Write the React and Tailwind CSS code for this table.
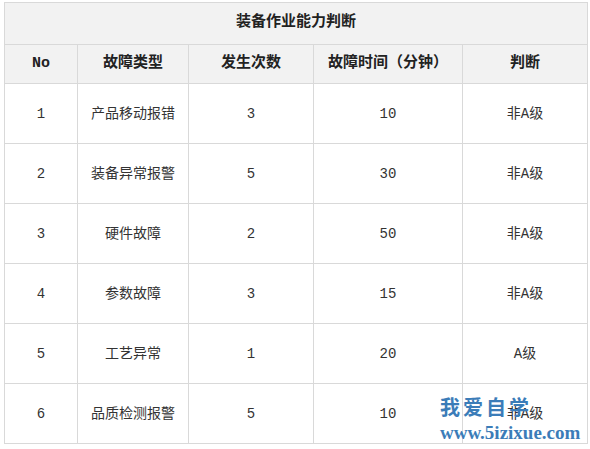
const rows = [
  ['1', '产品移动报错', '3', '10', '非A级'],
  ['2', '装备异常报警', '5', '30', '非A级'],
  ['3', '硬件故障', '2', '50', '非A级'],
  ['4', '参数故障', '3', '15', '非A级'],
  ['5', '工艺异常', '1', '20', 'A级'],
  ['6', '品质检测报警', '5', '10', '非A级'],
]

const headers = ['No', '故障类型', '发生次数', '故障时间（分钟）', '判断']

export default function App() {
  return (
    <div
      className="relative h-[449px] w-[590px] overflow-hidden bg-white pl-[4px] pt-[2px] text-[#333]"
      style={{ fontFamily: '"Liberation Mono", "Noto Sans CJK SC", monospace' }}
    >
      <table className="w-[583px] table-fixed border-collapse border border-[#d9d9d9] text-center">
        <colgroup>
          <col className="w-[73px]" />
          <col className="w-[111px]" />
          <col className="w-[125px]" />
          <col className="w-[149px]" />
          <col className="w-[125px]" />
        </colgroup>
        <thead>
          <tr className="h-[42px] bg-[#f2f2f2]">
            <th colSpan={5} className="border border-[#d9d9d9] text-[15px] font-bold text-[#222]">
              装备作业能力判断
            </th>
          </tr>
          <tr className="h-[39px] bg-[#f2f2f2]">
            {headers.map((h) => (
              <th key={h} className="border border-[#d9d9d9] text-[15px] font-bold text-[#222]">
                {h}
              </th>
            ))}
          </tr>
        </thead>
        <tbody>
          {rows.map((r) => (
            <tr key={r[0]} className="h-[60px]">
              {r.map((c, i) => (
                <td key={i} className="border border-[#d9d9d9] pt-[2px] text-[14px]">
                  {c}
                </td>
              ))}
            </tr>
          ))}
        </tbody>
      </table>

      {/* watermark */}
      <div
        className="absolute left-[440px] top-[398px] font-bold leading-none text-[#3b7cb8]"
        style={{ fontFamily: '"Liberation Serif", "Noto Sans CJK SC", serif' }}
      >
        <div className="text-[20px] tracking-[3px]">我爱自学</div>
        <div className="mt-[5px] text-[19px]">www.5izixue.com</div>
      </div>
    </div>
  )
}
